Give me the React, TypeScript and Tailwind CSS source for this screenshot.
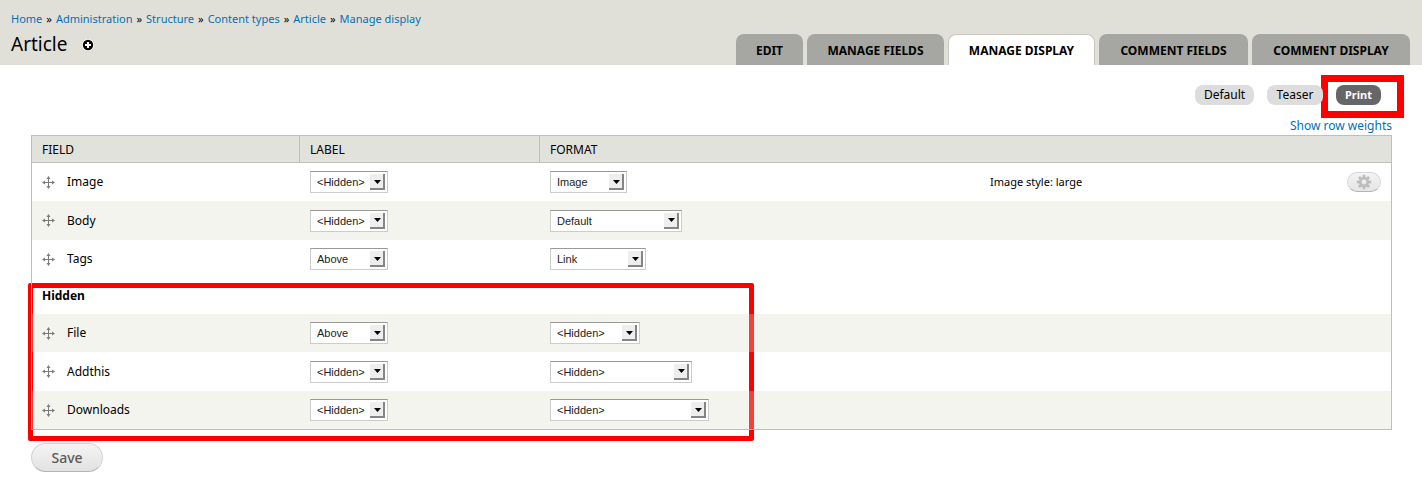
import React from "react";

const crumbs = ["Home", "Administration", "Structure", "Content types", "Article", "Manage display"];

const tabs = [
  { label: "EDIT", width: "w-[67px]" },
  { label: "MANAGE FIELDS", width: "w-[137px]" },
  { label: "MANAGE DISPLAY", width: "w-[147px]", active: true },
  { label: "COMMENT FIELDS", width: "w-[149px]" },
  { label: "COMMENT DISPLAY", width: "w-[158px]" },
];

type Field = {
  name: string;
  label: string;
  format: string;
  width: string;
  height: string;
  shaded?: boolean;
  summary?: string;
};

const visibleFields: Field[] = [
  { name: "Image", label: "<Hidden>", format: "Image", width: "w-[77px]", height: "h-[38px]", summary: "Image style: large" },
  { name: "Body", label: "<Hidden>", format: "Default", width: "w-[132px]", height: "h-[39px]", shaded: true },
  { name: "Tags", label: "Above", format: "Link", width: "w-24", height: "h-[38px]" },
];

const hiddenFields: Field[] = [
  { name: "File", label: "Above", format: "<Hidden>", width: "w-[90px]", height: "h-[38px]", shaded: true },
  { name: "Addthis", label: "<Hidden>", format: "<Hidden>", width: "w-[142px]", height: "h-[39px]" },
  { name: "Downloads", label: "<Hidden>", format: "<Hidden>", width: "w-[159px]", height: "h-[38px]", shaded: true },
];

function MoveIcon() {
  return (
    <svg width="13" height="13" viewBox="0 0 13 13" fill="#7c7c7c" aria-hidden="true">
      <path d="M6 2h1v4h4v1H7v4H6V7H2V6h4z" />
      <path d="M6.5 0 8.5 3h-4zM6.5 13l2-3h-4zM0 6.5l3-2v4zM13 6.5l-3-2v4z" />
    </svg>
  );
}

function GearIcon() {
  const angles = [0, 45, 90, 135, 180, 225, 270, 315];
  return (
    <svg width="16" height="16" viewBox="0 0 16 16" fill="#bebebe" aria-hidden="true">
      {angles.map((a) => (
        <path key={a} d="M6.6.8h2.8v3.4H6.6z" transform={`rotate(${a} 8 8)`} />
      ))}
      <path fillRule="evenodd" d="M8 2.8a5.2 5.2 0 1 0 0 10.4A5.2 5.2 0 0 0 8 2.8zm0 2.8a2.4 2.4 0 1 1 0 4.8 2.4 2.4 0 0 1 0-4.8z" />
    </svg>
  );
}

function Picker({ name, value, width }: { name: string; value: string; width: string }) {
  return (
    <span className={`relative block h-[22px] ${width}`}>
      <select
        aria-label={name}
        defaultValue={value}
        className="block h-full w-full appearance-none border border-[#ccc] border-t-[#999] bg-white pl-1.5 pr-5 font-['Liberation_Sans',sans-serif] text-[11px] leading-5 text-[#222]"
      >
        {["<Hidden>", "Above", "Inline", "Image", "Default", "Link"].map((o) => (
          <option key={o}>{o}</option>
        ))}
      </select>
      <span className="pointer-events-none absolute right-[3px] top-[3px] flex h-4 w-[15px] items-center justify-center border-b-2 border-r-2 border-[#858585] bg-[#eee] pl-px pt-px">
        <svg width="7" height="4" viewBox="0 0 7 4" aria-hidden="true">
          <path d="M0 0h7L3.5 4z" />
        </svg>
      </span>
    </span>
  );
}

function FieldRow({ field }: { field: Field }) {
  return (
    <tr className={`${field.height} ${field.shaded ? "bg-[rgba(214,217,197,0.3)]" : ""}`}>
      <td className="pl-2.5">
        <div className="flex items-center gap-3">
          <MoveIcon />
          <span>{field.name}</span>
        </div>
      </td>
      <td className="pl-[11px]">
        <Picker name={`Label display for ${field.name}`} value={field.label} width="w-[78px]" />
      </td>
      <td className="pl-[11px]">
        <Picker name={`Formatter for ${field.name}`} value={field.format} width={field.width} />
      </td>
      <td className="pl-[11px] text-[11px]">{field.summary}</td>
      <td className="pr-2.5">
        {field.summary && (
          <button
            aria-label={`Settings for ${field.name}`}
            className="ml-auto flex h-5 w-[34px] items-center justify-center rounded-full border border-[#d8d8d8] border-b-[#b4b4b4] bg-linear-to-b from-[#f4f4f4] to-[#e5e5e5]"
          >
            <GearIcon />
          </button>
        )}
      </td>
    </tr>
  );
}

export default function App() {
  return (
    <div className="bg-white font-['Noto_Sans',sans-serif] text-[12px] leading-4 text-black">
      <header className="bg-[#e0e0d8] pt-[11px]">
        <nav aria-label="Breadcrumb" className="flex h-4 gap-1 pl-[11px] text-[11px]">
          {crumbs.map((c, i) => (
            <React.Fragment key={c}>
              {i > 0 && <span>»</span>}
              <a href="#" className="text-[#0071b8]">{c}</a>
            </React.Fragment>
          ))}
        </nav>
        <div className="flex h-[38px] items-end justify-between pl-[11px] pr-3">
          <div className="flex items-center gap-3.5 self-start pt-[5px]">
            <h1 className="text-[19px] leading-6">Article</h1>
            <button aria-label="Add to shortcuts" className="pt-0.5">
              <svg width="12" height="12" viewBox="0 0 12 12" aria-hidden="true">
                <circle cx="6" cy="6" r="6" fill="#fff" />
                <circle cx="6" cy="6" r="5.2" />
                <path d="M5 3h2v2h2v2H7v2H5V7H3V5h2z" fill="#fff" />
              </svg>
            </button>
          </div>
          <nav aria-label="Primary" className="flex gap-1">
            {tabs.map((t) => (
              <a
                key={t.label}
                href="#"
                className={`flex h-[31px] items-center justify-center whitespace-nowrap rounded-t-lg pt-0.5 font-bold ${t.width} ${
                  t.active ? "border border-b-0 border-[#c8c8c0] bg-white" : "bg-[#a6a7a2]"
                }`}
              >
                {t.label}
              </a>
            ))}
          </nav>
        </div>
      </header>

      <main className="pl-[31px] pr-[30px]">
        <nav aria-label="View modes" className="flex h-[53px] items-start justify-end gap-[13px] pr-[11px] pt-5">
          <a href="#" className="relative z-10 flex h-5 w-[59px] items-center justify-center rounded-lg bg-[#ddd]">Default</a>
          <a href="#" className="relative z-10 flex h-5 w-14 items-center justify-center rounded-lg bg-[#ddd]">Teaser</a>
          <span className="relative flex">
            <span className="pointer-events-none absolute -bottom-[13px] -left-[15px] -right-[23px] -top-2.5 border-[7px] border-[#f00]" />
            <a href="#" className="relative flex h-5 w-[45px] items-center justify-center rounded-lg bg-[#666] text-[11px] font-bold text-white">Print</a>
          </span>
        </nav>
        <div className="flex h-[17px] justify-end">
          <a href="#" className="text-[#0071b8]">Show row weights</a>
        </div>

        <div className="relative">
          <div className="pointer-events-none absolute -bottom-[11px] -left-[3px] top-[148px] w-[726px] rounded-[2px] border-[5px] border-[#f00]" />
          <div className="relative border border-[#bebfb9]">
            <table className="w-full table-fixed border-separate border-spacing-0 text-left">
              <colgroup>
                <col className="w-[267px]" />
                <col className="w-60" />
                <col className="w-[440px]" />
                <col />
                <col className="w-20" />
              </colgroup>
              <thead>
                <tr className="h-[27px] bg-[#e1e2dc]">
                  <th className="border-b border-[#bebfb9] pl-2.5 pt-px font-normal">FIELD</th>
                  <th className="border-b border-l border-[#bebfb9] pl-2.5 pt-px font-normal">LABEL</th>
                  <th colSpan={3} className="border-b border-l border-[#bebfb9] pl-2.5 pt-px font-normal">FORMAT</th>
                </tr>
              </thead>
              <tbody>
                {visibleFields.map((f) => (
                  <FieldRow key={f.name} field={f} />
                ))}
                <tr className="h-9">
                  <th colSpan={5} className="pl-2.5 font-bold">Hidden</th>
                </tr>
                {hiddenFields.map((f) => (
                  <FieldRow key={f.name} field={f} />
                ))}
              </tbody>
            </table>
          </div>
        </div>

        <button className="mt-[13px] flex h-[29px] w-[72px] items-center justify-center rounded-full border border-[#d4d4d4] border-b-[#b4b4b4] bg-linear-to-b from-[#f4f4f4] to-[#e2e2e2] text-[14px] font-medium text-[#5a5a5a]">
          Save
        </button>
      </main>
    </div>
  );
}
